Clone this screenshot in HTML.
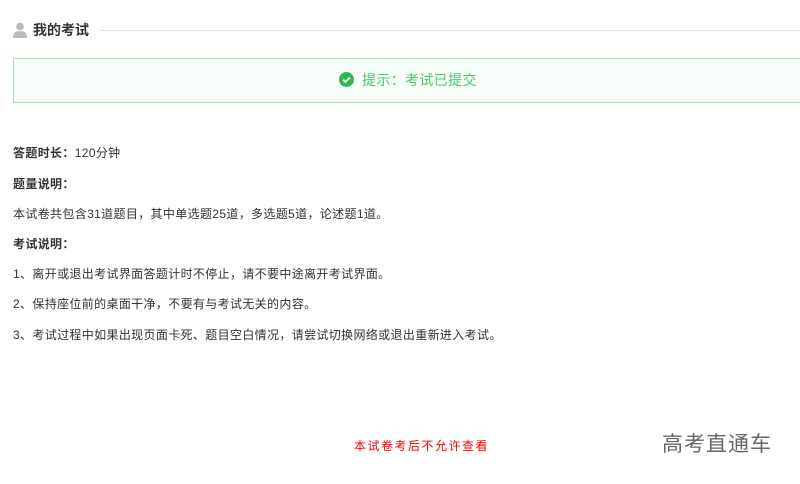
<!DOCTYPE html>
<html><head><meta charset="utf-8"><style>
body{margin:0;width:800px;height:484px;background:#fff;font-family:"Liberation Sans","Noto Sans CJK SC",sans-serif;position:relative;overflow:hidden;color:#333}
.t{position:absolute;font-size:12px;white-space:nowrap;line-height:14px;letter-spacing:0.35px}
b{font-weight:bold}
</style></head><body>
<svg style="position:absolute;left:13px;top:22px" width="14" height="16" viewBox="0 0 14 16"><circle cx="7" cy="4.5" r="3.8" fill="#bbb"/><path d="M0 16 Q0 9 7 9 Q14 9 14 16Z" fill="#bbb"/></svg>
<div class="t" style="left:33px;top:23px;font-size:14px;font-weight:bold;color:#333;letter-spacing:0">我的考试</div>
<div style="position:absolute;left:100px;top:30px;width:700px;border-top:1px dotted #ccc"></div>
<div style="position:absolute;left:13px;top:58px;width:800px;height:43px;border:1px solid #a8e6b8;background:#f7fdf9"></div>
<svg style="position:absolute;left:339px;top:72px" width="15" height="15" viewBox="0 0 16 16"><circle cx="8" cy="8" r="8" fill="#2fb84f"/><path d="M4.5 8.2l2.4 2.4 4.6-4.6" stroke="#fff" stroke-width="2" fill="none"/></svg>
<div class="t" style="left:362px;top:72px;font-size:14px;line-height:16px;color:#4fc86a">提示：考试已提交</div>
<div class="t" style="left:13px;top:146px"><b>答题时长：</b>120分钟</div>
<div class="t" style="left:13px;top:177px"><b>题量说明：</b></div>
<div class="t" style="left:13px;top:207px">本试卷共包含31道题目，其中单选题25道，多选题5道，论述题1道。</div>
<div class="t" style="left:13px;top:237px"><b>考试说明：</b></div>
<div class="t" style="left:13px;top:267px">1、离开或退出考试界面答题计时不停止，请不要中途离开考试界面。</div>
<div class="t" style="left:13px;top:297px">2、保持座位前的桌面干净，不要有与考试无关的内容。</div>
<div class="t" style="left:13px;top:328px">3、考试过程中如果出现页面卡死、题目空白情况，请尝试切换网络或退出重新进入考试。</div>
<div class="t" style="left:354px;top:439px;color:#f00;letter-spacing:1.5px">本试卷考后不允许查看</div>
<div class="t" style="left:662px;top:432px;font-size:21px;line-height:25px;color:#666;letter-spacing:1px">高考直通车</div>
</body></html>
